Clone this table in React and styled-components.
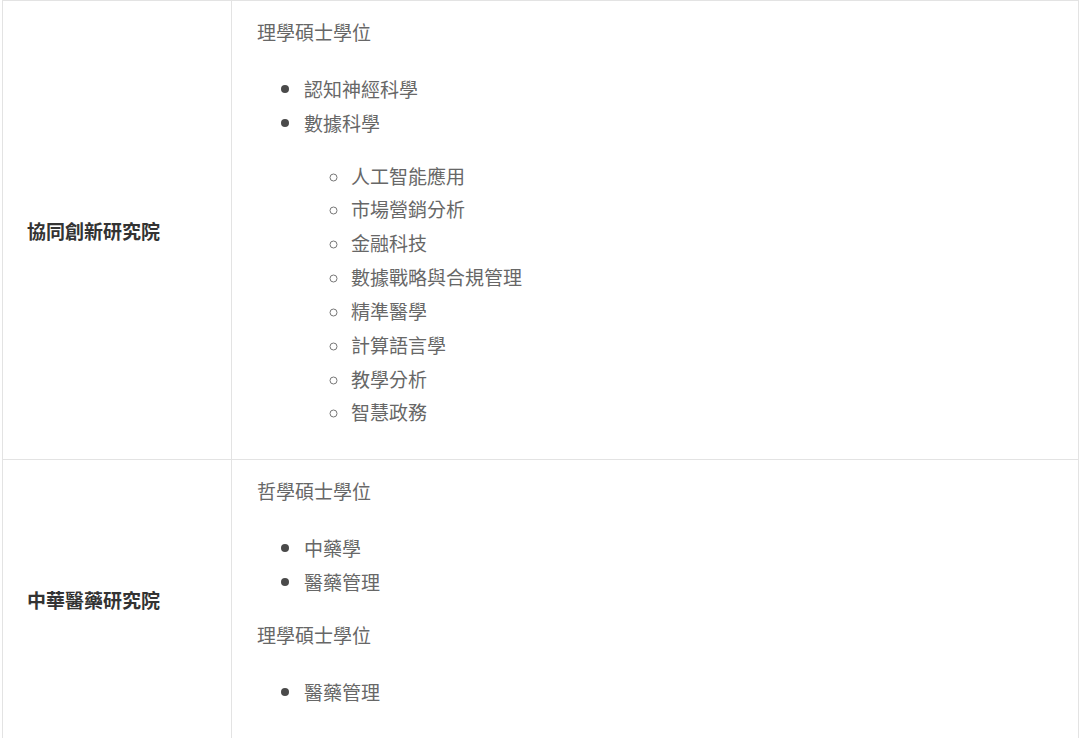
import React from 'react';
import styled, { createGlobalStyle } from 'styled-components';

const GlobalStyle = createGlobalStyle`
  html, body {
    margin: 0;
    padding: 0;
    background: #fff;
  }
  body {
    font-family: "Noto Sans CJK TC", "Noto Sans", sans-serif;
    overflow: hidden;
  }
`;

const rows = [
  {
    name: '協同創新研究院',
    blocks: [
      {
        title: '理學碩士學位',
        items: [
          { label: '認知神經科學' },
          {
            label: '數據科學',
            children: [
              '人工智能應用',
              '市場營銷分析',
              '金融科技',
              '數據戰略與合規管理',
              '精準醫學',
              '計算語言學',
              '教學分析',
              '智慧政務',
            ],
          },
        ],
      },
    ],
  },
  {
    name: '中華醫藥研究院',
    blocks: [
      { title: '哲學碩士學位', items: [{ label: '中藥學' }, { label: '醫藥管理' }] },
      { title: '理學碩士學位', items: [{ label: '醫藥管理' }] },
    ],
  },
];

const App = () => (
  <>
    <GlobalStyle />
    <Table>
      <colgroup>
        <col style={{ width: 229 }} />
        <col />
      </colgroup>
      <tbody>
        {rows.map((row) => (
          <tr key={row.name}>
            <NameCell>{row.name}</NameCell>
            <ProgramCell>
              {row.blocks.map((block, i) => (
                <React.Fragment key={i}>
                  <Degree>{block.title}</Degree>
                  <List>
                    {block.items.map((item) => (
                      <Item key={item.label}>
                        {item.label}
                        {item.children && (
                          <SubList>
                            {item.children.map((c) => (
                              <Item key={c}>{c}</Item>
                            ))}
                          </SubList>
                        )}
                      </Item>
                    ))}
                  </List>
                </React.Fragment>
              ))}
            </ProgramCell>
          </tr>
        ))}
      </tbody>
    </Table>
  </>
);

export default App;

const Table = styled.table`
  border-collapse: collapse;
  margin: 0 0 0 2px;
  width: 1077px;
  table-layout: fixed;
  font-size: 19px;
  line-height: 33.85px;

  td {
    border: 1px solid #e3e3e3;
  }
`;

const NameCell = styled.td`
  padding: 2px 10px 0 24px;
  vertical-align: middle;
  font-weight: 700;
  color: #333;
`;

const ProgramCell = styled.td`
  padding: 14px 24px 11px 25px;
  vertical-align: top;
  color: #676767;
`;

const Degree = styled.p`
  margin: 0 0 23px;
`;

const List = styled.ul`
  margin: 19px 0;
  padding-left: 47px;
  list-style: disc;

  li::marker {
    color: #4a4a4a;
    font-size: 21px;
  }
`;

const SubList = styled.ul`
  margin: 19px 0;
  padding-left: 47px;
  list-style: circle;

  li::marker {
    color: #777;
    font-size: 19px;
  }
`;

const Item = styled.li`
  margin: 0;
`;
